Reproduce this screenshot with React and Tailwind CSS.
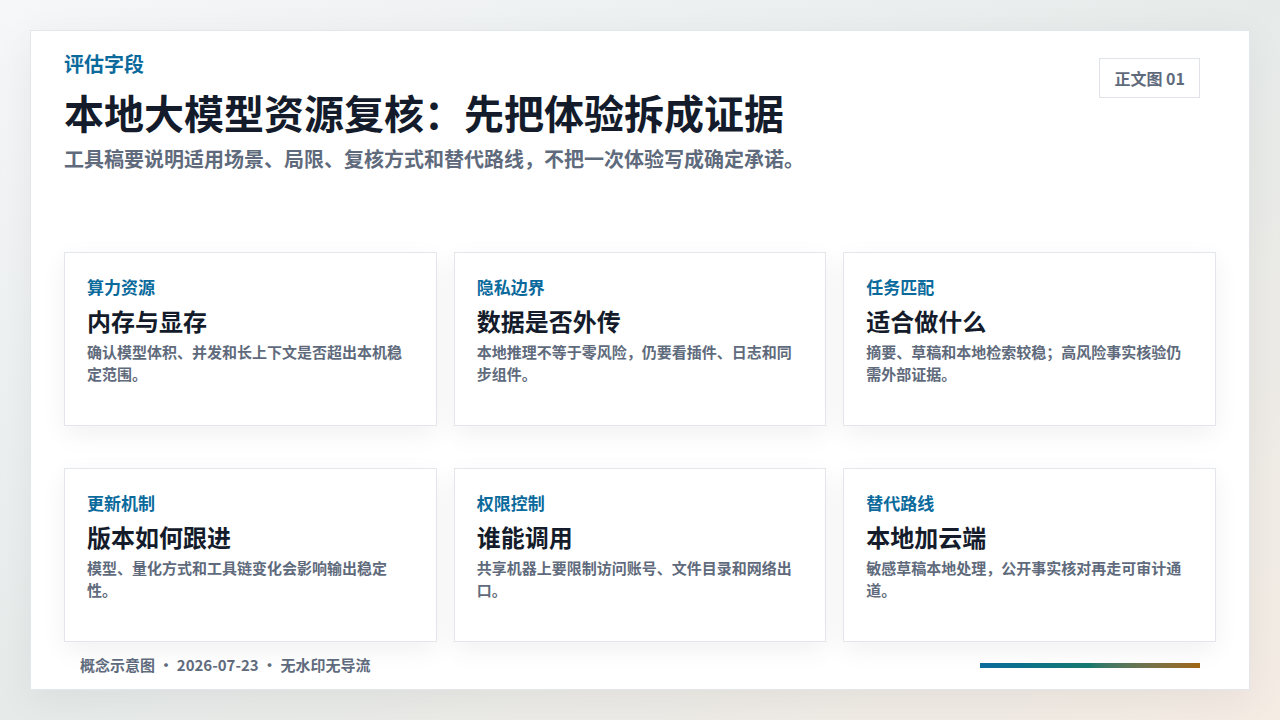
const cards = [
  ["算力资源", "内存与显存", "确认模型体积、并发和长上下文是否超出本机稳定范围。"],
  ["隐私边界", "数据是否外传", "本地推理不等于零风险，仍要看插件、日志和同步组件。"],
  ["任务匹配", "适合做什么", "摘要、草稿和本地检索较稳；高风险事实核验仍需外部证据。"],
  ["更新机制", "版本如何跟进", "模型、量化方式和工具链变化会影响输出稳定性。"],
  ["权限控制", "谁能调用", "共享机器上要限制访问账号、文件目录和网络出口。"],
  ["替代路线", "本地加云端", "敏感草稿本地处理，公开事实核对再走可审计通道。"],
];

export default function App() {
  return (
    <div className="w-[1280px] h-[720px] bg-gradient-to-br from-[#f6f7f8] via-[#e6ebea] to-[#f5ece4] pt-[30px] pl-[30px]" style={{ fontFamily: '"Noto Sans CJK SC", "Noto Sans", sans-serif' }}>
      <div className="relative w-[1220px] h-[660px] bg-white border border-[#e3e6ea] shadow-[0_10px_40px_rgba(0,0,0,0.06)] pl-[33px] pr-[33px] pt-[19px]">
        <div className="flex justify-between">
          <div>
            <div className="text-[20px] leading-[28px] font-bold text-[#0b6a9c]">评估字段</div>
            <div className="mt-[8px] text-[40px] leading-[52px] font-bold text-[#141c2c]">本地大模型资源复核：先把体验拆成证据</div>
            <div className="mt-[6px] text-[20px] leading-[30px] font-bold text-[#5f6b7c]">工具稿要说明适用场景、局限、复核方式和替代路线，不把一次体验写成确定承诺。</div>
          </div>
          <div className="mt-[8px] mr-[16px] h-[40px] px-[14px] border border-[#e0e3e8] flex items-center text-[16px] font-bold text-[#5f6b7c]">正文图 01</div>
        </div>
        <div className="mt-[78px] grid grid-cols-3 gap-x-[17px] gap-y-[42px]">
          {cards.map(([a, b, c]) => (
            <div key={a} className="h-[174px] border border-[#e3e6ea] bg-white shadow-[0_8px_24px_rgba(0,0,0,0.06)] pl-[22px] pr-[30px] pt-[22px]">
              <div className="text-[17px] leading-[24px] font-bold text-[#0b6a9c]">{a}</div>
              <div className="mt-[6px] text-[24px] leading-[32px] font-bold text-[#141c2c]">{b}</div>
              <div className="mt-[4px] text-[15px] leading-[22px] font-bold text-[#5f6b7c]">{c}</div>
            </div>
          ))}
        </div>
        <div className="mt-[12px] flex justify-between items-center pl-[16px]">
          <div className="text-[15px] font-bold text-[#5f6b7c]">概念示意图 · 2026-07-23 · 无水印无导流</div>
          <div className="w-[220px] h-[5px] mr-[16px] bg-gradient-to-r from-[#0b6a9c] via-[#167a6e] to-[#a0660e]"></div>
        </div>
      </div>
    </div>
  );
}
